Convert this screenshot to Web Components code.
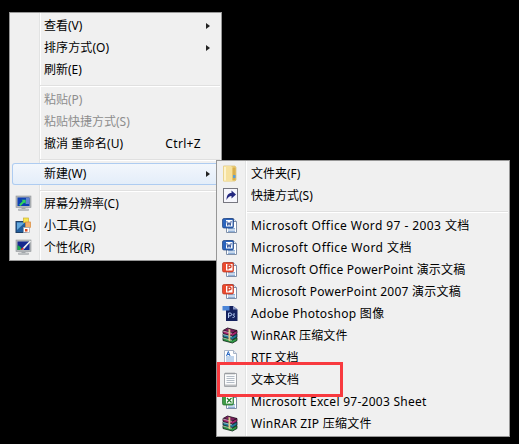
<!DOCTYPE html>
<html lang="zh"><head><meta charset="utf-8"><title>Context menu</title>
<style>
html,body{margin:0;padding:0;background:#000;}
body{width:519px;height:444px;position:relative;overflow:hidden;font:12px "Noto Sans","Noto Sans CJK SC",sans-serif;color:#000;}
</style></head><body>
<desk-top>
<ctx-menu style="left:9px;top:12px;width:213px;--g:29px">
<menu-item sub>查看(V)</menu-item>
<menu-item sub style="letter-spacing:.1px">排序方式(O)</menu-item>
<menu-item>刷新(E)</menu-item>
<menu-sep></menu-sep>
<menu-item disabled>粘贴(P)</menu-item>
<menu-item disabled>粘贴快捷方式(S)</menu-item>
<menu-item key="Ctrl+Z">撤消 重命名(U)</menu-item>
<menu-sep></menu-sep>
<menu-item sub active>新建(W)</menu-item>
<menu-sep style="height:7px"></menu-sep>
<menu-item icon="monitor">屏幕分辨率(C)</menu-item>
<menu-item icon="gadget">小工具(G)</menu-item>
<menu-item icon="personal">个性化(R)</menu-item>
</ctx-menu>
<ctx-menu style="left:216px;top:160px;width:294px;--g:28px">
<menu-item icon="folder">文件夹(F)</menu-item>
<menu-item icon="shortcut">快捷方式(S)</menu-item>
<menu-sep></menu-sep>
<menu-item icon="word" style="letter-spacing:.42px">Microsoft Office Word 97 - 2003 文档</menu-item>
<menu-item icon="word" style="letter-spacing:.45px">Microsoft Office Word 文档</menu-item>
<menu-item icon="ppt" style="letter-spacing:.18px">Microsoft Office PowerPoint 演示文稿</menu-item>
<menu-item icon="ppt" style="letter-spacing:.24px">Microsoft PowerPoint 2007 演示文稿</menu-item>
<menu-item icon="ps" style="letter-spacing:.3px">Adobe Photoshop 图像</menu-item>
<menu-item icon="rar" style="letter-spacing:.1px">WinRAR 压缩文件</menu-item>
<menu-item icon="rtf">RTF 文档</menu-item>
<menu-item icon="txt">文本文档</menu-item>
<menu-item icon="xls" style="letter-spacing:.27px">Microsoft Excel 97-2003 Sheet</menu-item>
<menu-item icon="rar" style="letter-spacing:.27px">WinRAR ZIP 压缩文件</menu-item>
</ctx-menu>
<red-mark></red-mark>
</desk-top>
<script>
const page=`<path d="M4.500 1.500h7l3 3v11h-10z" fill="#fff" stroke="#7f8fa8"/><path d="M11.500 1.500v3h3" fill="#dbe6f3" stroke="#7f8fa8"/><path d="M6 11.500h7M6 13h7M6 14.500h7" stroke="#8fb0d8"/>`;
const stand=`<path d="M6.500 12.500h4v1.500h-4z" fill="#a7abae"/><path d="M3.500 14h10v1.500h-10z" fill="#c8cbcd" stroke="#999da1" stroke-width=".5"/>`;
const ICONS={
monitor:`<rect x="1" y="1" width="15" height="11.500" fill="#b3b7ba" stroke="#93979b" stroke-width=".6"/><rect x="2.500" y="2.500" width="12" height="8.500" fill="#0f3fb4"/><path d="M4 9.800l3.800-3.800L6.500 4.700h4.200v4.200L9.300 7.500 5.500 11z" fill="#32d65a"/><path d="M11 4h3M11 6h3M11 8h3" stroke="#dbe8ff" stroke-width=".8"/>${stand}`,
gadget:`<rect x="1" y="4.500" width="10" height="11" fill="#215d9c" stroke="#1e3f66"/><path d="M2 5.500h8L2 13z" fill="#63a8dc"/><rect x="8.500" y="1" width="5" height="4.500" fill="#f7e54e" stroke="#cbb12e" stroke-width=".7"/><rect x="10.500" y="5" width="5" height="5.500" fill="#f5b06a" stroke="#d98a3a" stroke-width=".7"/><rect x="8.500" y="10.500" width="6" height="5" fill="#fff" stroke="#9aa2ad" stroke-width=".7"/><rect x="10" y="12" width="2.500" height="2.500" fill="#dc4a1e"/>`,
personal:`<rect x="1" y="1" width="15" height="11.500" fill="#b3b7ba" stroke="#93979b" stroke-width=".6"/><rect x="2.500" y="2.500" width="12" height="8.500" fill="#16288f"/><path d="M2.500 11V6l3 2 1.500 3z" fill="#19a84a"/><path d="M5 10.500c2-.2 3-1 3.500-2.500l6.500-6.500 1 1L10 9c-1 1.800-3 2.300-5 1.500z" fill="#f2f2f2"/><path d="M5 10.500c1-.2 2-1 2.500-2l1.500 1.300c-1 1.200-2.500 1.500-4 .7z" fill="#e02c2c"/>${stand}`,
folder:`<path d="M1.500 1h11.500l1 1.500V15l-1 1H1.500z" fill="#efd27c" stroke="#d2b35e" stroke-width=".6"/><path d="M1.500 1h7.500l1.500 1.500V16.500H1.500z" fill="#f6e19e"/><path d="M3 2v13.500" stroke="#fdf3cc" stroke-width="2"/><path d="M10.500 2.500h3v12.500h-3z" fill="#d9ae4c"/><path d="M11 10h2.500v3h-2.500z" fill="#5b9fd8"/>`,
shortcut:`<rect x="1.500" y="1.500" width="14" height="14" fill="#f6f6fc" stroke="#777780"/><path d="M4.500 13c0-4.500 1.800-7 5-7V3.500l4.500 4-4.500 4V9c-2 0-3.600 1.500-5 4z" fill="#23277f"/>`,
word:`${page}<rect x="0.500" y="1.500" width="11" height="9.500" rx="1.500" fill="#2b64bd" stroke="#1c3f7c" stroke-width=".7"/><rect x="4" y="3" width="6.500" height="6.500" fill="#fff"/><path d="M4.800 4l1 4.500 1.200-3 1.200 3 1-4.500" fill="none" stroke="#1c3f8c" stroke-width=".9"/>`,
ppt:`${page}<rect x="0.500" y="1.500" width="11" height="9.500" rx="1.500" fill="#ec4a2e" stroke="#b8341e" stroke-width=".7"/><rect x="4" y="3" width="6.500" height="6.500" fill="#fff"/><path d="M6 8.500V4h1.600a1.400 1.400 0 010 2.900H6" fill="none" stroke="#d23a22" stroke-width="1.300"/>`,
ps:`<path d="M4 1h7l4.500 3.500V16H4z" fill="#14215e"/><path d="M11 1l4.500 3.500H11z" fill="#8c9bc8"/><path d="M.5 1h7v4.500h-7z" fill="#4c86d8"/><path d="M6.500 13V8h1.600a1.400 1.400 0 010 2.900H6.500M13 9h-1.300c-1.100 0-1.100 1.400 0 1.500s1.100 1.900-.1 1.900h-1.100" fill="none" stroke="#b5cdf4"/>`,
rar:`<path d="M1 3.500L5.500 1 15 3.500 10.500 6z" fill="#7b1f5e" stroke="#1d0d1c" stroke-width=".8"/><path d="M1 3.500v3L10.500 9l4.500-2.500v-3L10.500 6z" fill="#a9256f" stroke="#1d0d1c" stroke-width=".8"/><path d="M1 7l9.500 2.500L15 7v3l-4.500 2.500L1 10z" fill="#1f7d9c" stroke="#0d1c24" stroke-width=".8"/><path d="M1 10.500L10.500 13l4.500-2.500v3L10.500 16 1 13.500z" fill="#2f9a46" stroke="#0c2412" stroke-width=".8"/><path d="M1 4l9 2.300M1 7.500l9 2.300M1 11l9 2.300" stroke="#f0f0f0" stroke-width=".6"/><path d="M6.500 2l1.800.5v11.800l-1.800-.5z" fill="#dcc98a"/>`,
rtf:`<path d="M2.500 1.500h9l3 3v11h-12z" fill="#fff" stroke="#a8b4c6"/><path d="M11.500 1.500v3h3" fill="#dfe8f4" stroke="#a8b4c6"/><path d="M4 8h8M4 10h8M4 12h8M4 14h8" stroke="#7fa8d8"/><path d="M4.500 7l1.800-4.500L8 7M5.200 5.500h2.200" fill="none" stroke="#2868c4"/>`,
txt:`<path d="M2.500 2.500h12v13h-12z" fill="#fbfcfd" stroke="#a4a7ab"/><path d="M4 1.500v2M6 1.500v2M8 1.500v2M10 1.500v2M12 1.500v2" stroke="#8f9296"/><path d="M4.500 5.500h8M4.500 7.500h8M4.500 9.500h8M4.500 11.500h8" stroke="#b4bcc6"/><path d="M3 13.500h11v1.500H3z" fill="#bcbec1"/>`,
xls:`${page}<rect x="0.500" y="2.500" width="11" height="9.500" rx="1.500" fill="#3f9b46" stroke="#1f6a2a" stroke-width=".7"/><rect x="4" y="4" width="6.500" height="6.500" fill="#fff"/><path d="M5 5l4.500 4.500M9.500 5L5 9.500" stroke="#1f7a2a" stroke-width="1.200"/>`
};
customElements.define('desk-top',class extends HTMLElement{constructor(){super();this.attachShadow({mode:'open'}).innerHTML=`<style>:host{display:block;width:519px;height:444px;position:relative;background:#000}</style><slot></slot>`}});
customElements.define('ctx-menu',class extends HTMLElement{constructor(){super();this.attachShadow({mode:'open'}).innerHTML=`<style>:host{display:block;position:absolute;box-sizing:border-box;border:1px solid #979797;padding:1px 1px 2px;background:linear-gradient(90deg,#f0f0f0 0,#f0f0f0 var(--g),#e2e3e3 var(--g),#e2e3e3 calc(var(--g) + 1px),#fff calc(var(--g) + 1px),#fff calc(var(--g) + 2px),#f0f0f0 calc(var(--g) + 2px))}</style><slot></slot>`}});
customElements.define('menu-sep',class extends HTMLElement{constructor(){super();this.attachShadow({mode:'open'}).innerHTML=`<style>:host{display:block;height:8px;box-sizing:border-box;padding:5px 0 0 29px}i{display:block;height:1px;background:#e0e0e0;border-bottom:1px solid #fff}</style><i></i>`}});
customElements.define('menu-item',class extends HTMLElement{constructor(){super();
const s=this.attachShadow({mode:'open'});
const n=this.getAttribute('icon'),k=this.getAttribute('key');
s.innerHTML=`<style>
:host{display:flex;align-items:center;height:22px;box-sizing:border-box;padding-right:10px;position:relative;white-space:nowrap;line-height:22px}
:host([disabled]){color:#8d8d8d}
:host([active]){background:linear-gradient(#f3f7fc,#e3edf9);box-shadow:inset 0 0 0 1px #aeccf1;border-radius:3px;margin:1px -6px 0 1px}
.ic{width:29px;margin-left:4px;flex:none;display:flex;height:17px;margin-top:1px}
:host([active]) .ic{margin-left:3px}
svg{width:17px;height:17px;display:block}
.t{flex:1;margin-top:2px}
:host([active]) .t{margin-top:0}
.k{margin:2px 9px 0 0;letter-spacing:.33px}
.a{width:0;height:0;border-left:4px solid #222;border-top:3.5px solid transparent;border-bottom:3.5px solid transparent;margin-top:1px}
:host([active]) .a{margin:0 6px 0 0}
</style><span class="ic">${n?`<svg viewBox="0 0 17 17">${ICONS[n]}</svg>`:''}</span><span class="t"><slot></slot></span>${k?`<span class="k">${k}</span>`:''}${this.hasAttribute('sub')?'<span class="a"></span>':''}`;
}});
customElements.define('red-mark',class extends HTMLElement{constructor(){super();this.attachShadow({mode:'open'}).innerHTML=`<style>:host{display:block;position:absolute;left:217px;top:362px;width:126px;height:35px;box-sizing:border-box;border:3px solid #f83a3f}</style>`}});
</script>
</body></html>
